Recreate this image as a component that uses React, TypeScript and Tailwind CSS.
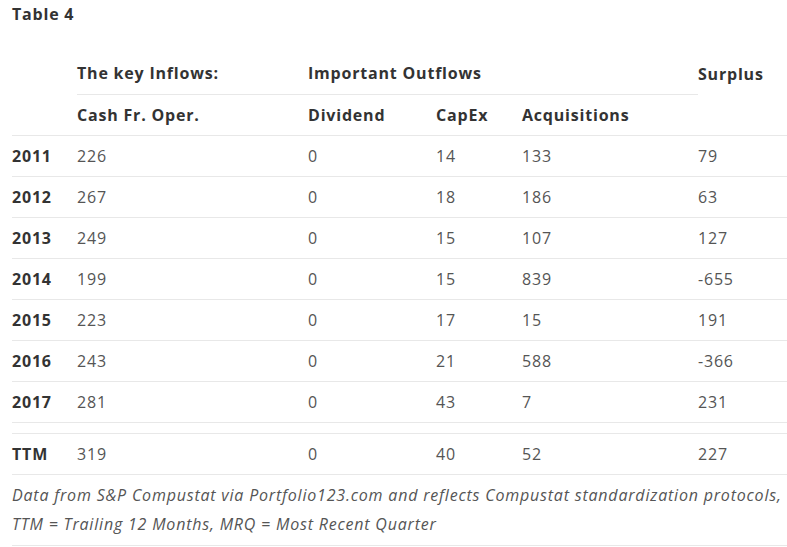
import React from "react";

const rows = [
  ["2011", "226", "0", "14", "133", "79"],
  ["2012", "267", "0", "18", "186", "63"],
  ["2013", "249", "0", "15", "107", "127"],
  ["2014", "199", "0", "15", "839", "-655"],
  ["2015", "223", "0", "17", "15", "191"],
  ["2016", "243", "0", "21", "588", "-366"],
  ["2017", "281", "0", "43", "7", "231"],
];

const line = "border-b border-[#e8e8e8]";
const th = "p-0 h-[41px] text-left font-bold text-[#333]";
const td = "p-0 h-[41px]";

export default function App() {
  return (
    <div
      className="bg-white w-[787px] h-[547px] overflow-hidden text-[16px] tracking-[0.05em] text-[#555]"
      style={{ fontFamily: '"Open Sans", "Liberation Sans", sans-serif' }}
    >
      <div className="pl-[12px] h-[53px]">
        <div className="font-bold text-[#333] leading-[28px]">Table 4</div>
      </div>
      <table className="ml-[12px] w-[775px] table-fixed border-collapse">
        <colgroup>
          <col className="w-[65px]" />
          <col className="w-[231px]" />
          <col className="w-[128px]" />
          <col className="w-[86px]" />
          <col className="w-[176px]" />
          <col className="w-[89px]" />
        </colgroup>
        <thead>
          <tr>
            <th className={th}></th>
            <th className={`${th} ${line}`}>The key Inflows:</th>
            <th colSpan={3} className={`${th} ${line}`}>
              Important Outflows
            </th>
            <th className={th}>Surplus</th>
          </tr>
          <tr>
            <th className={`${th} ${line}`}></th>
            <th className={`${th} ${line}`}>Cash Fr. Oper.</th>
            <th className={`${th} ${line}`}>Dividend</th>
            <th className={`${th} ${line}`}>CapEx</th>
            <th className={`${th} ${line}`}>Acquisitions</th>
            <th className={`${th} ${line}`}></th>
          </tr>
        </thead>
        <tbody>
          {rows.map((r) => (
            <tr key={r[0]}>
              <td className={`${td} font-bold text-[#333] ${line}`}>{r[0]}</td>
              {r.slice(1).map((c, i) => (
                <td key={i} className={`${td} ${line}`}>
                  {c}
                </td>
              ))}
            </tr>
          ))}
          <tr>
            <td colSpan={6} className={`p-0 h-[11px] ${line}`}></td>
          </tr>
          <tr>
            <td className={`${td} font-bold text-[#333] ${line}`}>TTM</td>
            <td className={`${td} ${line}`}>319</td>
            <td className={`${td} ${line}`}>0</td>
            <td className={`${td} ${line}`}>40</td>
            <td className={`${td} ${line}`}>52</td>
            <td className={`${td} ${line}`}>227</td>
          </tr>
          <tr>
            <td colSpan={6} className={`p-0 pt-[6px] pb-[6px] leading-[29px] italic ${line}`}>
              Data from S&amp;P Compustat via Portfolio123.com and reflects Compustat standardization protocols,
              <br />
              TTM = Trailing 12 Months, MRQ = Most Recent Quarter
            </td>
          </tr>
        </tbody>
      </table>
    </div>
  );
}
